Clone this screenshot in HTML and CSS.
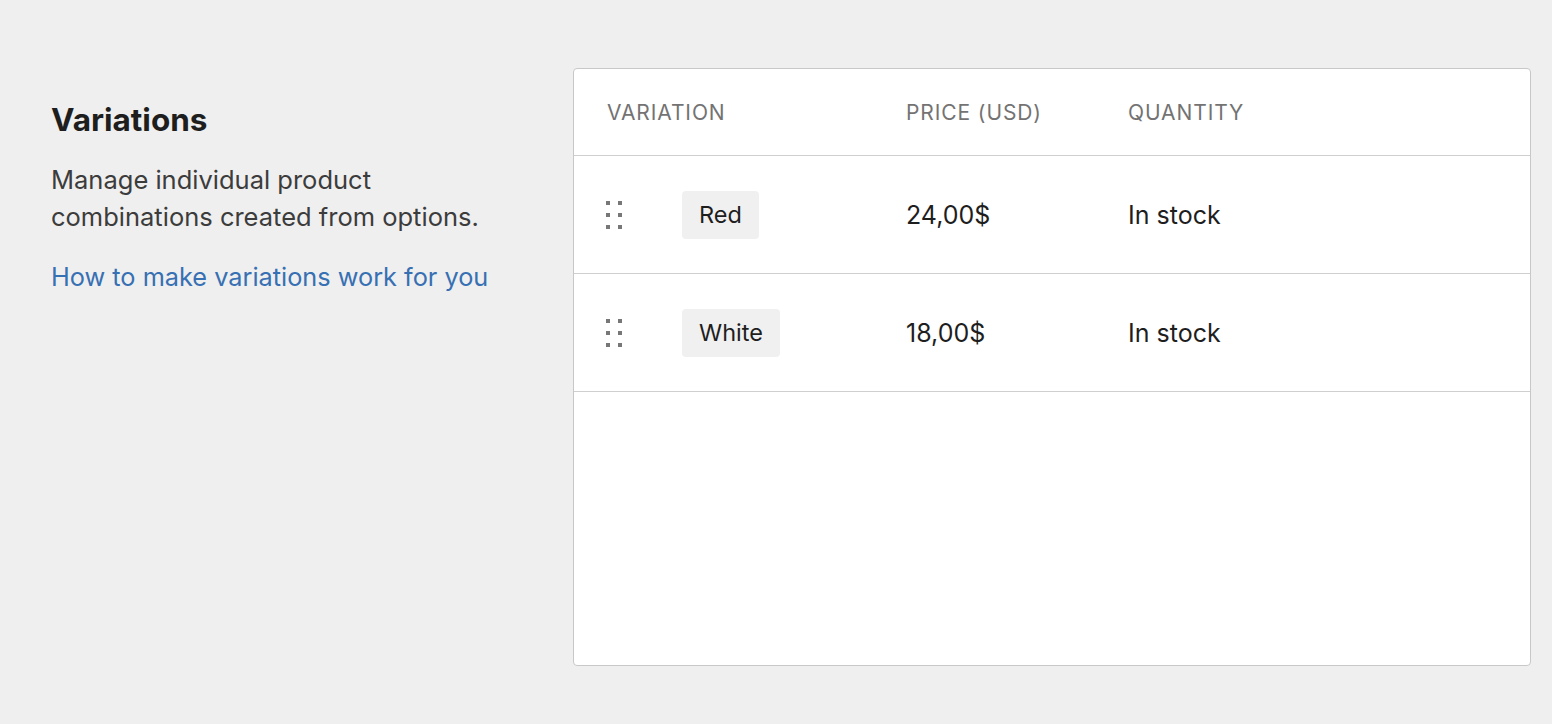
FILE: index.html
```html
<!DOCTYPE html>
<html lang="en">
<head>
  <meta charset="UTF-8" />
  <title>Variations</title>
  <link rel="stylesheet" href="styles.css">
</head>
<body>
  <div class="page">
    <!-- Section intro -->
    <div class="intro">
      <h2>Variations</h2>
      <p>Manage individual product combinations created from options.</p>
      <a href="#" class="help-link">How to make variations work for you</a>
    </div>

    <!-- Variations table -->
    <div class="card">
      <div class="row head">
        <div>VARIATION</div>
        <div>PRICE (USD)</div>
        <div>QUANTITY</div>
      </div>
      <div class="row">
        <div class="name-cell">
          <span class="handle"><i></i><i></i><i></i><i></i><i></i><i></i></span>
          <span class="pill">Red</span>
        </div>
        <div>24,00$</div>
        <div>In stock</div>
      </div>
      <div class="row">
        <div class="name-cell">
          <span class="handle"><i></i><i></i><i></i><i></i><i></i><i></i></span>
          <span class="pill">White</span>
        </div>
        <div>18,00$</div>
        <div>In stock</div>
      </div>
    </div>
  </div>
</body>
</html>
```

FILE: styles.css
```css
body {
  margin: 0;
  background: #efefef;
  font-family: Inter, 'Noto Sans', sans-serif;
  color: #1e1e1e;
}
.page {
  display: flex;
  padding: 68px 0 0 51px;
}
.intro {
  width: 522px;
  padding-top: 32px;
}
.intro h2 {
  margin: 0;
  font-size: 31.5px;
  line-height: 40px;
  font-weight: 700;
  color: #1e1e1e;
}
.intro p {
  margin: 21px 0 0;
  width: 440px;
  font-size: 25.5px;
  line-height: 37px;
  color: #3c3c3c;
}
.help-link {
  display: block;
  margin-top: 23px;
  font-size: 25.3px;
  line-height: 37px;
  color: #3770b3;
  text-decoration: none;
}
.card {
  width: 956px;
  height: 596px;
  background: #fff;
  border: 1px solid #c8c8c8;
  border-radius: 4px;
}
.row {
  display: grid;
  grid-template-columns: 299px 222px 1fr;
  align-items: center;
  height: 117px;
  padding-left: 33px;
  border-bottom: 1px solid #cfcfcf;
  font-size: 25px;
  line-height: 30px;
}
.row.head {
  height: 86px;
  font-size: 21px;
  line-height: 25px;
  letter-spacing: 0.9px;
  color: #737373;
}
.name-cell {
  display: flex;
  align-items: center;
}
.handle {
  display: grid;
  grid-template-columns: 4px 4px;
  column-gap: 8px;
  row-gap: 8px;
  margin-left: -1px;
  margin-right: 60px;
}
.handle i {
  width: 4px;
  height: 4px;
  background: #777;
}
.pill {
  background: #f0f0f0;
  border-radius: 4px;
  padding: 0 17px;
  font-size: 23.5px;
  line-height: 48px;
}
```
